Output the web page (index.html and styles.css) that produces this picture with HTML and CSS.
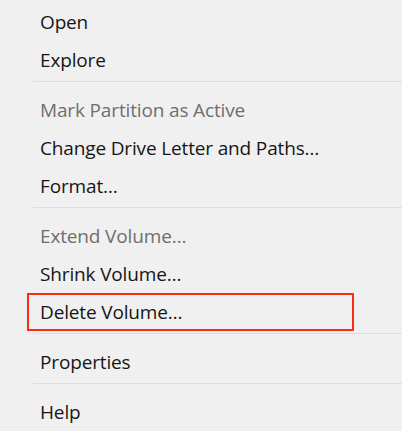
FILE: index.html
```html
<!DOCTYPE html>
<html lang="en">
<head>
  <meta charset="UTF-8" />
  <title>Volume menu</title>
  <link rel="stylesheet" href="styles.css">
</head>
<body>
  <ul class="menu">
    <li class="item">Open</li>
    <li class="item">Explore</li>
    <li class="sep"></li>
    <li class="item disabled">Mark Partition as Active</li>
    <li class="item">Change Drive Letter and Paths…</li>
    <li class="item">Format…</li>
    <li class="sep"></li>
    <li class="item disabled">Extend Volume…</li>
    <li class="item">Shrink Volume…</li>
    <li class="item marked">Delete Volume…</li>
    <li class="sep"></li>
    <li class="item">Properties</li>
    <li class="sep"></li>
    <li class="item">Help</li>
  </ul>
</body>
</html>
```

FILE: styles.css
```css
html, body {
  margin: 0;
  padding: 0;
  background: #f0f0f0;
  height: 100%;
  overflow: hidden;
}

.menu {
  list-style: none;
  margin: 0;
  padding: 3px 0 0 0;
  font-family: "Open Sans", "Noto Sans", sans-serif;
  font-size: 19px;
  letter-spacing: -0.15px;
  color: #161616;
}

.item {
  height: 38px;
  line-height: 38px;
  padding-left: 40px;
  white-space: nowrap;
}

.item.disabled {
  color: #6e6e6e;
}

/* red highlight round Delete Volume */
.item.marked {
  box-sizing: border-box;
  margin-left: 27px;
  width: 327px;
  padding-left: 11px;
  border: 2px solid #f82d14;
  line-height: 34px;
}

.sep {
  height: 1px;
  margin: 2px 0 9px 33px;
  background: #dedede;
}
```
